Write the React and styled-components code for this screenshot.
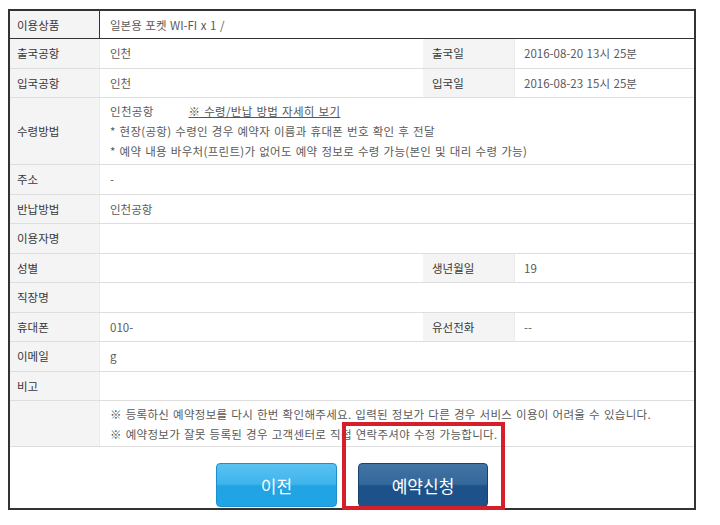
import React from 'react';
import styled, { createGlobalStyle } from 'styled-components';

const GlobalStyle = createGlobalStyle`
  body {
    margin: 0;
    background: #fff;
    font-family: "Noto Sans CJK KR", "Noto Sans", sans-serif;
  }
`;

export const Page = styled.div`
  padding: 9px 0 0 8px;
`;

export const Frame = styled.div`
  position: relative;
  width: 688px;
  box-sizing: border-box;
  border: 2px solid #333;
  background: #fff;
`;

export const Row = styled.div`
  display: grid;
  grid-template-columns: 90px 323px 92px 1fr;
  height: ${(p) => p.$h || 29.5}px;
  box-sizing: border-box;
  border-bottom: 1px solid ${(p) => (p.$head ? '#333' : '#dedede')};
`;

export const Label = styled.div`
  display: flex;
  align-items: center;
  box-sizing: border-box;
  padding-left: ${(p) => (p.$right ? 9 : 7)}px;
  background: #f4f4f4;
  border-right: 1px solid ${(p) => (p.$head ? '#333' : '#ececec')};
  color: #383838;
  font-size: 11.5px;
`;

export const Value = styled.div`
  display: flex;
  flex-direction: column;
  justify-content: center;
  gap: 4px;
  padding-left: ${(p) => (p.$right ? 9 : 10)}px;
  grid-column: ${(p) => (p.$wide ? 'span 3' : 'auto')};
  color: #5a5a5a;
  font-size: 11.5px;
  word-spacing: 1px;
`;

export const Line = styled.div`
  white-space: nowrap;
  line-height: 16px;
  letter-spacing: 0.3px;
`;

export const GuideLink = styled.a`
  margin-left: 35px;
  color: #555;
  text-decoration: underline;
`;

export const ButtonBar = styled.div`
  display: flex;
  justify-content: center;
  align-items: flex-start;
  gap: 21px;
  height: 61px;
  box-sizing: border-box;
  padding-top: 16px;
`;

export const Button = styled.button`
  width: ${(p) => p.$w}px;
  height: 44px;
  border-radius: 4px;
  border: 1px solid ${(p) => (p.$primary ? '#17446f' : '#1b8fcf')};
  background: ${(p) =>
    p.$primary
      ? 'linear-gradient(to bottom, #4274a4 0%, #34679b 48%, #1d5189 52%, #1d5189 100%)'
      : 'linear-gradient(to bottom, #5ac2f1 0%, #3eb4ec 48%, #20a4e4 52%, #20a4e4 100%)'};
  color: #fff;
  font-family: "Noto Sans CJK KR", sans-serif;
  font-size: 17px;
  padding: 0;
  cursor: pointer;
`;

export const Highlight = styled.div`
  position: absolute;
  left: 332px;
  top: 411px;
  width: 163px;
  height: 88px;
  box-sizing: border-box;
  border: 4px solid #d3202a;
  pointer-events: none;
`;

const rows = [
  { label: '반납방법', value: '인천공항' },
  { label: '이용자명', value: '' },
  { label: '성별', value: '', rLabel: '생년월일', rValue: '19' },
  { label: '직장명', value: '' },
  { label: '휴대폰', value: '010-', rLabel: '유선전화', rValue: '--' },
  { label: '이메일', value: 'g' },
  { label: '비고', value: '' },
];

function InfoRow({ label, value, rLabel, rValue, h }) {
  return (
    <Row $h={h}>
      <Label>{label}</Label>
      {rLabel ? (
        <>
          <Value>{value}</Value>
          <Label $right>{rLabel}</Label>
          <Value $right>{rValue}</Value>
        </>
      ) : (
        <Value $wide>{value}</Value>
      )}
    </Row>
  );
}

export default function App() {
  return (
    <>
      <GlobalStyle />
      <Page>
        <Frame>
          <Row $h={28} $head>
            <Label $head>이용상품</Label>
            <Value $wide>일본용 포켓 WI-FI x 1 /</Value>
          </Row>
          <InfoRow label="출국공항" value="인천" rLabel="출국일" rValue="2016-08-20 13시 25분" />
          <InfoRow label="입국공항" value="인천" rLabel="입국일" rValue="2016-08-23 15시 25분" />
          <Row $h={67}>
            <Label>수령방법</Label>
            <Value $wide>
              <Line>
                인천공항<GuideLink>※ 수령/반납 방법 자세히 보기</GuideLink>
              </Line>
              <Line>* 현장(공항) 수령인 경우 예약자 이름과 휴대폰 번호 확인 후 전달</Line>
              <Line>* 예약 내용 바우처(프린트)가 없어도 예약 정보로 수령 가능(본인 및 대리 수령 가능)</Line>
            </Value>
          </Row>
          <InfoRow label="주소" value="-" />
          {rows.map((r) => (
            <InfoRow key={r.label} {...r} />
          ))}
          <Row $h={46}>
            <Label />
            <Value $wide>
              <Line>※ 등록하신 예약정보를 다시 한번 확인해주세요. 입력된 정보가 다른 경우 서비스 이용이 어려울 수 있습니다.</Line>
              <Line>※ 예약정보가 잘못 등록된 경우 고객센터로 직접 연락주셔야 수정 가능합니다.</Line>
            </Value>
          </Row>
          <ButtonBar>
            <Button $w={121}>이전</Button>
            <Button $w={130} $primary>예약신청</Button>
          </ButtonBar>
          <Highlight />
        </Frame>
      </Page>
    </>
  );
}
